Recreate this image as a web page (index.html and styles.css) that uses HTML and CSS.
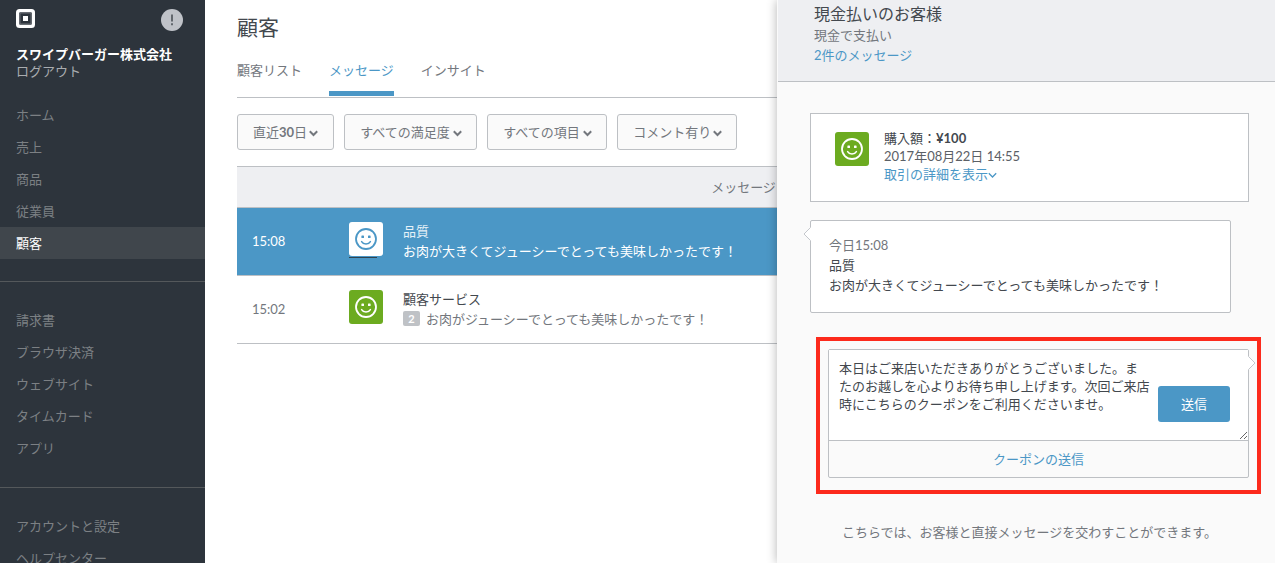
FILE: index.html
```html
<!DOCTYPE html>
<html lang="ja">
<head>
<meta charset="utf-8">
<meta name="viewport" content="width=device-width, initial-scale=1">
<title>顧客 - メッセージ</title>
<link rel="stylesheet" href="styles.css">
</head>
<body>
<svg class="sprite" aria-hidden="true">
  <symbol id="smile" viewBox="0 0 34 34">
    <circle cx="17" cy="17" r="10" fill="none" stroke="currentColor" stroke-width="1.8"/>
    <rect x="12.4" y="13.4" width="2.6" height="2.6" rx=".6" fill="currentColor"/>
    <rect x="19" y="13.4" width="2.6" height="2.6" rx=".6" fill="currentColor"/>
    <path d="M12.6 19.6c1 1.7 2.6 2.5 4.4 2.5s3.400-.8 4.400-2.500" fill="none" stroke="currentColor" stroke-width="1.500" stroke-linecap="round"/>
  </symbol>
  <symbol id="chevron" viewBox="0 0 9 7">
    <path d="M.8 1.300 4.500 5 8.200 1.300" fill="none" stroke="currentColor" stroke-width="2"/>
  </symbol>
  <symbol id="chevron-thin" viewBox="0 0 9 7">
    <path d="M.8 1.300 4.500 5 8.200 1.300" fill="none" stroke="currentColor" stroke-width="1.300"/>
  </symbol>
</svg>
<div class="app">
  <aside class="sidebar">
    <div class="brand">
      <svg class="logo" viewBox="0 0 19 19" role="img" aria-label="Square">
        <rect width="19" height="19" rx="3.500" fill="#fff"/>
        <rect x="3.200" y="3.200" width="12.600" height="12.600" rx="1" fill="#2d343c"/>
        <rect x="4" y="4" width="11" height="11" fill="none" stroke="#777b80" stroke-width=".8"/>
        <rect x="7" y="7" width="5" height="5" fill="#fff"/>
      </svg>
      <button class="alert" type="button" aria-label="お知らせ">
        <svg viewBox="0 0 22 22" aria-hidden="true">
          <circle cx="11" cy="11" r="11" fill="#bfc2c8"/>
          <path d="M10 5.500h2v7h-2zM10 14.300h2v2h-2z" fill="#62676d"/>
        </svg>
      </button>
    </div>
    <div class="account">
      <strong class="account-name">スワイプバーガー株式会社</strong>
      <a class="logout" href="#">ログアウト</a>
    </div>
    <nav>
      <ul class="nav-group">
        <li><a href="#">ホーム</a></li>
        <li><a href="#">売上</a></li>
        <li><a href="#">商品</a></li>
        <li><a href="#">従業員</a></li>
        <li><a class="current" href="#" aria-current="page">顧客</a></li>
      </ul>
      <ul class="nav-group">
        <li><a href="#">請求書</a></li>
        <li><a href="#">ブラウザ決済</a></li>
        <li><a href="#">ウェブサイト</a></li>
        <li><a href="#">タイムカード</a></li>
        <li><a href="#">アプリ</a></li>
      </ul>
      <ul class="nav-group">
        <li><a href="#">アカウントと設定</a></li>
        <li><a href="#">ヘルプセンター</a></li>
      </ul>
    </nav>
  </aside>

  <main class="main">
    <h1 class="page-title">顧客</h1>
    <nav class="tabs">
      <a class="tab" href="#">顧客リスト</a>
      <a class="tab selected" href="#" aria-current="page">メッセージ</a>
      <a class="tab" href="#">インサイト</a>
    </nav>
    <div class="filters">
      <button class="filter period" type="button" aria-haspopup="dialog">
        <span>直近<b>30</b>日</span>
        <svg class="chevron" aria-hidden="true"><use href="#chevron"/></svg>
      </button>
      <div class="picker">
        <select class="filter" aria-label="満足度"><option>すべての満足度</option></select>
        <svg class="chevron" aria-hidden="true"><use href="#chevron"/></svg>
      </div>
      <div class="picker">
        <select class="filter" aria-label="項目"><option>すべての項目</option></select>
        <svg class="chevron" aria-hidden="true"><use href="#chevron"/></svg>
      </div>
      <div class="picker">
        <select class="filter" aria-label="コメント"><option>コメント有り</option></select>
        <svg class="chevron" aria-hidden="true"><use href="#chevron"/></svg>
      </div>
    </div>
    <table class="messages">
      <thead>
        <tr><th colspan="3">メッセージ</th></tr>
      </thead>
      <tbody>
        <tr class="active">
          <td class="time">15:08</td>
          <td class="mood"><span class="face inverted"><svg aria-hidden="true"><use href="#smile"/></svg></span></td>
          <td><div class="topic">品質</div><div class="excerpt">お肉が大きくてジューシーでとっても美味しかったです！</div></td>
        </tr>
        <tr>
          <td class="time">15:02</td>
          <td class="mood"><span class="face"><svg aria-hidden="true"><use href="#smile"/></svg></span></td>
          <td><div class="topic">顧客サービス</div><div class="excerpt"><span class="count">2</span><span>お肉がジューシーでとっても美味しかったです！</span></div></td>
        </tr>
      </tbody>
    </table>
  </main>

  <section class="drawer" aria-label="会話">
    <header class="drawer-head">
      <h2 class="customer">現金払いのお客様</h2>
      <p>現金で支払い</p>
      <a href="#">2件のメッセージ</a>
    </header>
    <div class="thread">
      <article class="purchase">
        <span class="face"><svg aria-hidden="true"><use href="#smile"/></svg></span>
        <div>
          <p>購入額：<b>¥100</b></p>
          <p class="date">2017年08月22日 14:55</p>
          <a class="details" href="#">取引の詳細を表示<svg class="chevron" aria-hidden="true"><use href="#chevron-thin"/></svg></a>
        </div>
      </article>
      <article class="bubble">
        <svg class="pointer left" viewBox="0 0 8 14" aria-hidden="true"><path d="M8 0 1 7l7 7z" fill="#fff"/><path d="M7.500.5 1 7l6.500 6.500" fill="none" stroke="#c4c7cc"/></svg>
        <p class="when">今日15:08</p>
        <p>品質</p>
        <p>お肉が大きくてジューシーでとっても美味しかったです！</p>
      </article>
      <div class="highlight">
        <form class="reply">
          <div class="compose">
            <textarea class="reply-text" aria-label="返信">本日はご来店いただきありがとうございました。ま
たのお越しを心よりお待ち申し上げます。次回ご来店
時にこちらのクーポンをご利用くださいませ。</textarea>
            <button class="send" type="button">送信</button>
          </div>
          <button class="coupon" type="button">クーポンの送信</button>
          <svg class="pointer right" viewBox="0 0 8 14" aria-hidden="true"><path d="M0 0l7 7-7 7z" fill="#fff"/><path d="M.5.5 7 7 .5 13.500" fill="none" stroke="#c4c7cc"/></svg>
        </form>
      </div>
      <p class="note">こちらでは、お客様と直接メッセージを交わすことができます。</p>
    </div>
  </section>
</div>
</body>
</html>
```
FILE: styles.css
```css
:root {
  --blue: #4b97c6;
  --line: #bdc0c4;
  --text: #43484e;
  --muted: #73777d;
  --panel: #eeeff2;
  --paper: #fafafa;
}

* { box-sizing: border-box; }

body,
button,
select,
textarea {
  font-family: Lato, "Noto Sans CJK JP", sans-serif;
  font-size: 13px;
  line-height: 20px;
  color: var(--muted);
}

body {
  margin: 0;
  background: #fff;
}

h1, h2, p, ul { margin: 0; padding: 0; font-weight: 400; }
ul { list-style: none; }
a { color: var(--blue); text-decoration: none; }
button, select { cursor: pointer; }

.sprite { display: none; }

.app {
  position: relative;
  display: grid;
  grid-template-columns: 205px minmax(0, 1fr);
  height: 100vh;
  overflow: hidden;
}

/* Sidebar */
.sidebar {
  overflow-y: auto;
  scrollbar-width: none;
  padding-top: 9px;
  background: #2d343c;
}

.brand {
  display: flex;
  justify-content: space-between;
  padding: 0 22px 0 16px;
}

.logo { width: 19px; height: 19px; }

.alert {
  width: 22px;
  height: 22px;
  padding: 0;
  border: 0;
  background: none;
}

.alert svg { display: block; width: 22px; height: 22px; }

.account {
  display: flex;
  flex-direction: column;
  padding: 15px 16px 19px;
  line-height: 17px;
}

.account-name { color: #fff; }
.logout { color: #a9acb0; }

.nav-group { padding-bottom: 22px; }

.nav-group + .nav-group {
  padding: 22px 0 23px;
  border-top: 1px solid #54585b;
}

.nav-group a {
  display: block;
  padding: 0 16px;
  line-height: 32px;
  color: #7c8084;
}

.nav-group .current {
  background: #40464c;
  color: #fff;
}

/* Main column */
.main { padding: 11px 25px 0 32px; }

.page-title {
  font-size: 21px;
  line-height: 32px;
  color: var(--text);
}

.tabs {
  display: flex;
  gap: 27px;
  margin-top: 17px;
  padding-bottom: 1px;
  border-bottom: 1px solid var(--line);
}

.tab {
  padding-bottom: 11px;
  border-bottom: 5px solid transparent;
  color: var(--muted);
}

.tab.selected {
  border-color: var(--blue);
  color: var(--blue);
}

.filters {
  display: flex;
  gap: 10px;
  margin: 16px 0;
}

.picker { display: grid; align-items: center; }
.picker > * { grid-area: 1 / 1; }

.filter {
  height: 36px;
  padding: 0 24px 0 15px;
  border: 1px solid var(--line);
  border-radius: 3px;
  background: var(--paper);
  appearance: none;
}

.period {
  display: flex;
  align-items: center;
  gap: 2px;
  padding: 0 15px;
}

.chevron {
  width: 9px;
  height: 7px;
  margin-top: 3px;
}

.picker .chevron {
  justify-self: end;
  margin-right: 15px;
  pointer-events: none;
}

.messages {
  width: 100%;
  border-collapse: collapse;
}

.messages th {
  height: 41px;
  padding: 0;
  border: 1px solid var(--line);
  border-width: 1px 0;
  background: var(--panel);
  font-weight: 400;
}

.messages td {
  height: 68px;
  padding: 0 0 2px;
  border-bottom: 1px solid var(--line);
}

.messages .time { width: 112px; padding-left: 15px; }
.messages .mood { width: 54px; padding-bottom: 6px; }
.topic { color: var(--text); }
.excerpt { display: flex; align-items: center; gap: 6px; }

.active { background: var(--blue); }
.active td { color: #fff; }
.active .topic { color: #e6f1f8; }

.face {
  display: block;
  position: relative;
  flex: none;
  width: 34px;
  height: 34px;
  border-radius: 3px;
  background: #6cab20;
  color: #fff;
}

.face svg { display: block; width: 34px; height: 34px; }

.face.inverted {
  background: #fff;
  color: var(--blue);
}

.face.inverted::after {
  content: "";
  position: absolute;
  top: 35px;
  left: 0;
  width: 28px;
  height: 1px;
  background: #2f4350;
}

.count {
  width: 17px;
  border-radius: 2px;
  background: #bfc2c6;
  color: #fff;
  font-size: 11px;
  font-weight: 700;
  line-height: 15px;
  text-align: center;
}

/* Conversation drawer */
.drawer {
  position: absolute;
  top: 0;
  right: 0;
  bottom: 0;
  width: 39.06%;
  border-left: 1px solid var(--paper);
  background: var(--paper);
  box-shadow: 0 0 10px rgba(0, 0, 0, .3);
}

.drawer-head {
  padding: 3px 36px 16px;
  border-bottom: 1px solid var(--line);
  background: var(--panel);
}

.customer {
  font-size: 16px;
  line-height: 22px;
  color: var(--text);
}

.thread {
  padding: 31px 26px 0 32px;
  color: var(--text);
}

.purchase {
  display: flex;
  gap: 15px;
  padding: 15px 24px 18px;
  border: 1px solid var(--line);
  background: #fff;
  line-height: 18px;
}

.purchase .face { margin-top: 3px; }
.date { color: #5b6066; }
.details { display: flex; align-items: center; }

.bubble {
  position: relative;
  margin: 18px 18px 24px 0;
  padding: 14px 18px 17px;
  border: 1px solid var(--line);
  border-radius: 2px;
  background: #fff;
}

.when { color: var(--muted); }

.pointer {
  position: absolute;
  top: 6px;
  width: 8px;
  height: 14px;
}

.pointer.left { left: -8px; }
.pointer.right { right: -8px; }

.highlight {
  margin: 0 -12px 0 6px;
  padding: 8px 8px 12px;
  border: 4px solid #fc2a1c;
}

.reply {
  position: relative;
  border: 1px solid var(--line);
  border-radius: 2px;
}

.compose { position: relative; }

.reply-text {
  display: block;
  width: 100%;
  height: 90px;
  padding: 9px 94px 9px 10px;
  border: 0;
  background: #fff;
  color: var(--text);
  line-height: 18px;
  resize: vertical;
}

.send {
  position: absolute;
  right: 18px;
  bottom: 18px;
  width: 72px;
  height: 36px;
  border: 0;
  border-radius: 3px;
  background: var(--blue);
  color: #fff;
}

.coupon {
  width: 100%;
  height: 37px;
  border: 0;
  border-top: 1px solid var(--line);
  background: none;
  color: var(--blue);
  vertical-align: top;
}

.note {
  margin-top: 28px;
  color: var(--muted);
  text-align: center;
}
```
